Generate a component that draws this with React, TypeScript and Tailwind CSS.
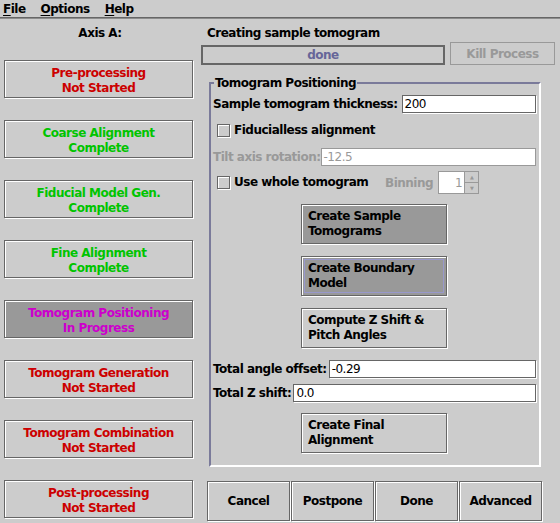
import React from "react";

type Tone = "red" | "green" | "magenta";

const STEPS: { name: string; state: string; tone: Tone; active?: boolean }[] = [
  { name: "Pre-processing", state: "Not Started", tone: "red" },
  { name: "Coarse Alignment", state: "Complete", tone: "green" },
  { name: "Fiducial Model Gen.", state: "Complete", tone: "green" },
  { name: "Fine Alignment", state: "Complete", tone: "green" },
  { name: "Tomogram Positioning", state: "In Progress", tone: "magenta", active: true },
  { name: "Tomogram Generation", state: "Not Started", tone: "red" },
  { name: "Tomogram Combination", state: "Not Started", tone: "red" },
  { name: "Post-processing", state: "Not Started", tone: "red" },
];

const TONE: Record<Tone, string> = {
  red: "text-[#cc0000]",
  green: "text-[#00c400]",
  magenta: "text-[#cc00cc]",
};

// Metal look: dark outline, white highlight inside top-left and outside bottom-right
const BEVEL = "border border-[#666666] shadow-[inset_1px_1px_0_#ffffff,1px_1px_0_#ffffff]";

function Menu({ label }: { label: string }) {
  return (
    <span>
      <span className="underline underline-offset-2">{label[0]}</span>
      {label.slice(1)}
    </span>
  );
}

function Field({ value, disabled, className = "" }: { value: string; disabled?: boolean; className?: string }) {
  return (
    <div
      className={`h-[18px] bg-white pl-[2px] font-normal leading-[16px] ${
        disabled ? "border border-[#999999] text-[#999999]" : "border border-[#666666] text-black shadow-[1px_1px_0_#ffffff]"
      } ${className}`}
    >
      {value}
    </div>
  );
}

function Check({ label }: { label: string }) {
  return (
    <div className="flex h-[13px] items-center gap-[4px] leading-[13px]">
      <span className={`h-[13px] w-[13px] ${BEVEL}`} />
      <span>{label}</span>
    </div>
  );
}

function ActionButton({ lines, pressed, focus }: { lines: string[]; pressed?: boolean; focus?: boolean }) {
  return (
    <div className={`ml-[90px] flex h-[40px] w-[146px] p-[2px] ${BEVEL} ${pressed ? "bg-[#999999]" : "bg-[#cccccc]"}`}>
      <div
        className={`flex flex-1 flex-col justify-center pl-[3px] leading-[15px] ${
          focus ? "border border-[#9999cc]" : "border border-transparent"
        }`}
      >
        {lines.map((l) => (
          <span key={l}>{l}</span>
        ))}
      </div>
    </div>
  );
}

export default function App() {
  return (
    <div className="h-[523px] w-[560px] overflow-hidden bg-[#cccccc] font-['DejaVu_Sans',sans-serif] text-[12px] font-bold tracking-[-0.5px] text-black">
      {/* menu bar */}
      <div className="flex h-[17px] items-start gap-[15px] pl-[3px] pt-[2px] leading-[15px]">
        <Menu label="File" />
        <Menu label="Options" />
        <Menu label="Help" />
      </div>
      <div className="h-px bg-[#666666]" />
      <div className="h-px bg-[#8c8c8c]" />

      <div className="flex">
        {/* left: process steps */}
        <div className="flex w-[200px] flex-col">
          <div className="pt-[7px] text-center leading-[15px]">Axis A:</div>
          <div className="ml-[4px] mt-[19px] flex flex-col gap-[22px]">
            {STEPS.map((s) => (
              <div
                key={s.name}
                className={`flex h-[38px] w-[189px] flex-col items-center justify-center pt-[4px] leading-[15px] ${BEVEL} ${
                  s.active ? "bg-[#999999]" : "bg-[#cccccc]"
                } ${TONE[s.tone]}`}
              >
                <span>{s.name}</span>
                <span>{s.state}</span>
              </div>
            ))}
          </div>
        </div>

        {/* right: positioning panel */}
        <div className="flex w-[360px] flex-col">
          <div className="pl-[7px] pt-[7px] leading-[15px]">Creating sample tomogram</div>
          <div className="mt-[1px] flex items-end">
            <div className="ml-[1px] flex h-[20px] w-[244px] items-center justify-center border-2 border-[#666666] text-[#666699]">
              done
            </div>
            <div className="ml-[5px] flex h-[23px] w-[105px] items-center justify-center border border-[#999999] text-[#999999]">
              Kill Process
            </div>
          </div>

          <div className="relative ml-[9px] mt-[17px] flex h-[385px] w-[332px] flex-col border-b-2 border-l-2 border-r-2 border-t-2 border-b-white border-l-[#7a7a9a] border-r-white border-t-[#7a7a9a]">
            <span className="absolute left-[3px] top-[-8px] bg-[#cccccc] px-[1px] leading-[15px]">Tomogram Positioning</span>

            <div className="mt-[11px] flex h-[19px] items-start gap-[4px] pl-[2px] pr-[3px]">
              <span className="leading-[18px]">Sample tomogram thickness:</span>
              <Field value="200" className="flex-1" />
            </div>

            <div className="mt-[10px] pl-[6px]">
              <Check label="Fiducialless alignment" />
            </div>

            <div className="mt-[11px] flex h-[18px] items-start pl-[2px] pr-[3px]">
              <span className="leading-[18px] text-[#999999]">Tilt axis rotation:</span>
              <Field value="-12.5" disabled className="flex-1" />
            </div>

            <div className="mt-[5px] flex h-[23px] items-center pl-[6px]">
              <div className="w-[168px]">
                <Check label="Use whole tomogram" />
              </div>
              <span className="text-[#999999]">Binning</span>
              <div className="ml-[5px] flex h-[23px]">
                <div className="flex w-[27px] items-center justify-end border border-[#999999] bg-white pr-[2px] font-normal text-[#999999]">
                  1
                </div>
                <div className="flex w-[14px] flex-col">
                  <div className="flex flex-1 items-center justify-center border border-l-0 border-[#999999] text-[5px] leading-none text-[#999999]">
                    ▲
                  </div>
                  <div className="flex flex-1 items-center justify-center border border-l-0 border-t-0 border-[#999999] text-[5px] leading-none text-[#999999]">
                    ▼
                  </div>
                </div>
              </div>
            </div>

            <div className="mt-[10px]">
              <ActionButton lines={["Create Sample", "Tomograms"]} pressed />
            </div>
            <div className="mt-[12px]">
              <ActionButton lines={["Create Boundary", "Model"]} pressed focus />
            </div>
            <div className="mt-[12px]">
              <ActionButton lines={["Compute Z Shift &", "Pitch Angles"]} />
            </div>

            <div className="mt-[12px] flex h-[18px] items-start gap-[2px] pl-[2px] pr-[3px]">
              <span className="leading-[18px]">Total angle offset:</span>
              <Field value="-0.29" className="flex-1" />
            </div>
            <div className="mt-[6px] flex h-[18px] items-start gap-[2px] pl-[2px] pr-[3px]">
              <span className="leading-[18px]">Total Z shift:</span>
              <Field value="0.0" className="flex-1" />
            </div>

            <div className="mt-[11px]">
              <ActionButton lines={["Create Final", "Alignment"]} />
            </div>
          </div>

          <div className="ml-[7px] mt-[14px] flex gap-[1px]">
            {["Cancel", "Postpone", "Done", "Advanced"].map((b) => (
              <div key={b} className={`flex h-[40px] w-[83px] items-center justify-center ${BEVEL}`}>
                {b}
              </div>
            ))}
          </div>
        </div>
      </div>
    </div>
  );
}
